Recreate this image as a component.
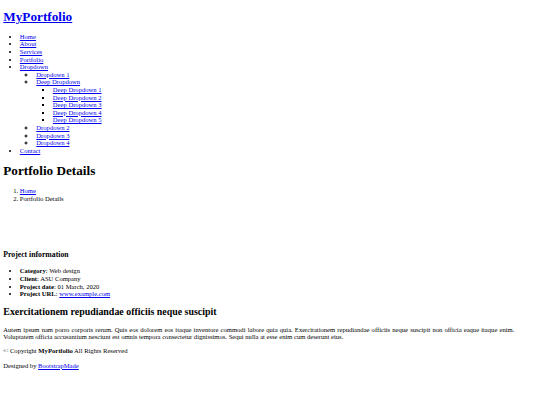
const link = 'text-[#0000ee] underline';

function NavLink({ label }: { label: string }) {
  return (
    <a href="#" className={link}>
      {label}
    </a>
  );
}

export default function App() {
  const deep = [1, 2, 3, 4, 5];

  return (
    <div className="m-[0.5em] font-['Liberation_Serif',serif] text-[6.608px] leading-[1.149] text-black">
      {/* Header */}
      <header>
        <h1 className="my-[0.67em] text-[2em] font-bold">
          <a href="#" className={link}>
            MyPortfolio
          </a>
        </h1>
        <nav>
          <ul className="my-[1em] list-disc pl-[2.5em]">
            <li><NavLink label="Home" /></li>
            <li><NavLink label="About" /></li>
            <li><NavLink label="Services" /></li>
            <li><NavLink label="Portfolio" /></li>
            <li>
              <NavLink label="Dropdown" />
              <ul className="list-[circle] pl-[2.5em]">
                <li><NavLink label="Dropdown 1" /></li>
                <li>
                  <NavLink label="Deep Dropdown" />
                  <ul className="list-[square] pl-[2.5em]">
                    {deep.map((n) => (
                      <li key={n}><NavLink label={`Deep Dropdown ${n}`} /></li>
                    ))}
                  </ul>
                </li>
                <li><NavLink label="Dropdown 2" /></li>
                <li><NavLink label="Dropdown 3" /></li>
                <li><NavLink label="Dropdown 4" /></li>
              </ul>
            </li>
            <li><NavLink label="Contact" /></li>
          </ul>
        </nav>
      </header>

      <main>
        {/* Breadcrumbs */}
        <section>
          <h1 className="my-[0.67em] text-[2em] font-bold">Portfolio Details</h1>
          <ol className="my-[1em] list-decimal pl-[2.5em]">
            <li><NavLink label="Home" /></li>
            <li>Portfolio Details</li>
          </ol>
        </section>

        {/* Slider (empty) */}
        <div className="h-[34px]" />

        {/* Project info */}
        <section>
          <h3 className="my-[1em] text-[1.17em] font-bold">Project information</h3>
          <ul className="my-[1em] list-disc pl-[2.5em]">
            <li><strong>Category</strong>: Web design</li>
            <li><strong>Client</strong>: ASU Company</li>
            <li><strong>Project date</strong>: 01 March, 2020</li>
            <li>
              <strong>Project URL</strong>: <a href="#" className={link}>www.example.com</a>
            </li>
          </ul>

          <h2 className="my-[0.83em] text-[1.5em] font-bold">
            Exercitationem repudiandae officiis neque suscipit
          </h2>
          <p className="my-[1em] max-w-[511px] text-justify">
            Autem ipsum nam porro corporis rerum. Quis eos dolorem eos itaque inventore commodi labore quia quia.
            Exercitationem repudiandae officiis neque suscipit non officia eaque itaque enim. Voluptatem officia
            accusantium nesciunt est omnis tempora consectetur dignissimos. Sequi nulla at esse enim cum deserunt eius.
          </p>
        </section>
      </main>

      <footer>
        <p className="my-[1em]">
          © Copyright <strong>MyPortfolio</strong> All Rights Reserved
        </p>
        <p className="my-[1em]">
          Designed by <a href="#" className={link}>BootstrapMade</a>
        </p>
      </footer>
    </div>
  );
}
